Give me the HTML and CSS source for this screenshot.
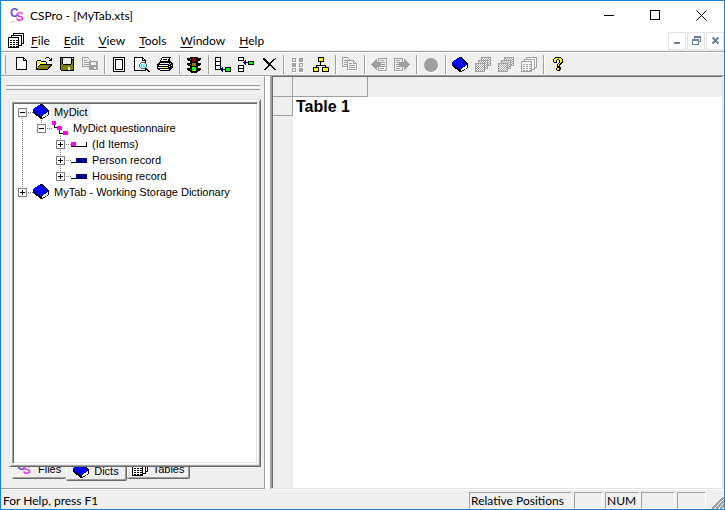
FILE: index.html
```html
<!DOCTYPE html>
<html lang="en">
<head>
<meta charset="utf-8">
<title>CSPro - [MyTab.xts]</title>
<link rel="stylesheet" href="styles.css">
</head>
<body>
<svg class="defs" aria-hidden="true">
  <symbol id="book" viewBox="0 0 16 16">
    <path d="M0 5l6-4 1-1h2l7 7v4l-7 4H8L0 9z" fill="#000"/>
    <path d="M9 12l6-4v3l-6 3z" fill="#fff"/>
    <path d="M0 5l6-4h2l7 7-7 4-7-5z" fill="#00f"/>
    <path d="M0 6h1v1h1v1h1v1h2v1h1v1h1v1h1v1H7v-1H6v-1H4v-1H3V9H1V8H0z" fill="#000080"/>
  </symbol>
  <symbol id="sheets" viewBox="0 0 16 16">
    <g fill="#fff" stroke="currentColor"><path d="M5.500.5h10v10h-10z"/><path d="M3.500 2.500h10v10h-10z"/><path d="M.5 4.500h10v10H.5z"/></g>
    <path d="M2 7h2v1H2zm3 0h2v1H5zm3 0h2v1H8zM2 9h2v1H2zm3 0h2v1H5zm3 0h2v1H8zM2 11h2v1H2zm3 0h2v1H5zm3 0h2v1H8zM2 13h2v1H2zm3 0h2v1H5zm3 0h2v1H8z" fill="currentColor"/>
  </symbol>
  <symbol id="stack" viewBox="0 0 16 16">
    <path d="M6 1h11v11h-3v3h-3v2H1v-1h9v-2h3v-3h3z" fill="#fff"/>
    <g fill="url(#dither)" stroke="#a0a0a0"><path d="M6.500.5h9v8h-9z"/><path d="M3.500 3.500h9v8h-9z"/><path d="M.5 6.500h9v8h-9z"/></g>
  </symbol>
  <pattern id="dither" width="2" height="2" patternUnits="userSpaceOnUse"><path d="M0 0h2v2H0z" fill="#fff"/><path d="M0 0h1v1H0zM1 1h1v1H1z" fill="#a0a0a0"/></pattern>
  <pattern id="straw" width="2" height="2" patternUnits="userSpaceOnUse"><path d="M0 0h2v2H0z" fill="#fff"/><path d="M0 0h1v1H0zM1 1h1v1H1z" fill="#ff0"/></pattern>
</svg>

<div class="window">
  <header class="titlebar">
    <svg class="icon" viewBox="0 0 16 16"><path d="M1 13h7v1H4v1H0v-1h1z" fill="#e0e0e0"/><text x="0" y="9" class="logo-mark"><tspan fill="#6a50d8">C</tspan><tspan dx="-3" dy="4" fill="#e43ce4">S</tspan></text></svg>
    <h1>CSPro - [MyTab.xts]</h1>
    <button class="caption" aria-label="Minimize"><svg viewBox="0 0 11 11"><path d="M0 5h10v1H0z"/></svg></button>
    <button class="caption" aria-label="Maximize"><svg viewBox="0 0 11 11"><path d="M.5.5h9v9h-9z" fill="none" stroke="#000"/></svg></button>
    <button class="caption" aria-label="Close"><svg viewBox="0 0 11 11" class="smooth"><path d="M.5.5l10 10M10.500.5l-10 10" stroke="#000" fill="none"/></svg></button>
  </header>

  <nav class="menubar">
    <svg class="icon"><use href="#sheets"/></svg>
    <button><u>F</u>ile</button><button><u>E</u>dit</button><button><u>V</u>iew</button><button><u>T</u>ools</button><button><u>W</u>indow</button><button><u>H</u>elp</button>
    <div class="mdi">
      <button aria-label="Minimize document"><svg viewBox="0 0 9 9"><path d="M1 6h6v2H1z"/></svg></button>
      <button aria-label="Restore document"><svg viewBox="0 0 9 9"><path d="M2 0h7v6H7V5h1V2H3v1H2zM0 3h7v6H0zm1 2v3h5V5z" fill-rule="evenodd"/></svg></button>
      <button aria-label="Close document"><svg viewBox="0 0 9 9" class="smooth"><path d="M1.500 1.500l6 6M7.500 1.500l-6 6" stroke="#6d7f93" stroke-width="2"/></svg></button>
    </div>
  </nav>

  <div class="toolbar" role="toolbar" aria-label="Standard">
    <i class="grip"></i>
    <button aria-label="New"><svg viewBox="0 0 16 16"><path d="M3.500.5h7l3 3v9h-10z" fill="#fff" stroke="#000"/><path d="M10 1h1v2h2v1h-3z"/></svg></button>
    <button aria-label="Open"><svg viewBox="0 0 16 16"><path d="M1 3h4v1h5v3H4v1H3v2H2v2H1z" fill="url(#straw)"/><path d="M1 3h4v1H1zM0 4h1v9H0zM5 4h5v1H5zM10 5h1v2h-1zM4 7h12v1H4zM3 8h1v1H3zM2 9h1v1H2zM1 11h1v1H1zM0 12h12v1H0zM15 8h-1v1h-1v1h-1v2h1v-1h1v-1h1V9h1V8zM9 1h1v1H9zM10 0h3v1h-3zM13 1h1v1h-1zM14 2h1v1h-1zM15 1h1v3h-3V3h2z"/><path d="M4 8h10v1h-1v1h-1v2H2v-2h1V9h1z" fill="#808000"/></svg></button>
    <button aria-label="Save"><svg viewBox="0 0 16 16"><path d="M1 0h14v14H2v-1H1z"/><path d="M2 1h1v6h1v1h8V7h1V3h1v10H2z" fill="#808000"/><path d="M4 1h8v6H4zM13 1h1v1h-1zM9 10h2v3H9z" fill="#efefef"/></svg></button>
    <button aria-label="Save all" disabled><svg viewBox="0 0 16 16"><path d="M1 1h6v2h2v3h8v8H8v-4H1z" fill="#fff"/><path d="M.5.5h5l3 3v6h-8z" fill="#efefef" stroke="#a0a0a0"/><path d="M2 3h3v1H2zM2 5h5v1H2zM2 7h5v1H2zM7 4h9v9H7z" fill="#a0a0a0"/><path d="M9 5h5v3H9zM12 10h2v2h-2z" fill="#efefef"/></svg></button>
    <i class="sep"></i>
    <button aria-label="Page setup"><svg viewBox="0 0 16 16"><path d="M2 0h12v15H2z"/><path d="M3 1h10v13H3z" fill="#fff"/><path d="M4 2h8v11H4z"/><path d="M5 3h6v9H5z" fill="#fff"/></svg></button>
    <button aria-label="Print preview"><svg viewBox="0 0 16 16"><path d="M.5.5h8l3 3v10H.5z" fill="#fff" stroke="#000"/><path d="M8 1h1v2h2v1H8zM12 11h1v1h1v1h1v1h1v1h-2v-1h-1v-1h-1v-1h-1v-1h1z"/><path d="M7 5h4v1h1v1h1v3h-1v1h-1v1H7v-1H6v-1H5V7h1V6h1z" fill="#606060"/><path d="M7 6h4v1h1v3h-1v1H7v-1H6V7h1z" fill="#bff"/><path d="M7 7h2v1H8v2H7zM9 9h2v1H9z" fill="#0ff"/></svg></button>
    <button aria-label="Print"><svg viewBox="0 0 16 16"><path d="M5 0h9v1h-1v3h1v1h1v1h1v5h-1v1h-1v1h-1v1H3v-1H1v-1H0V7h1V6h1V5h1V3h1V1h1z"/><path d="M6 1h6v1h-1v2H4V3h1V1zM3 6h9v1H2zM2 8h9v1H1zM1 10h10v1H1zM3 12h9v1H3z" fill="#fff"/><path d="M6 2h4v1H6zM5 4h5v1H5z"/><path d="M12 7h1v1h-1zM13 6h1v1h-1zM12 9h1v1h-1zM14 8h1v1h-1z" fill="#c0c0c0"/><path d="M7 10h3v1H7z" fill="#ff0"/></svg></button>
    <i class="sep"></i>
    <button aria-label="Run"><svg viewBox="0 0 16 16"><path d="M4 0h8v1h3v2h-1v1h-2v2h3v2h-1v1h-2v2h3v2h-1v1h-2v1h-1v1H5v-1H4v-1H2v-1H1v-2h3V9H2V8H1V6h3V4H2V3H1V1h3z"/><path d="M6 1h4v4H6z" fill="#800000"/><path d="M6 6h4v3H6z" fill="#808000"/><path d="M6 10h4v4H6z" fill="#0f0"/><path d="M7 10h1v1H7zM9 11h1v1H9zM7 13h2v1H7z" fill="#ff0"/><path d="M4 2h1v1H4zM4 7h1v1H4zM4 12h1v1H4z" fill="#808080"/></svg></button>
    <i class="sep"></i>
    <button aria-label="Add"><svg viewBox="0 0 16 16"><path d="M0 0h6v13H0z"/><path d="M1 1h4v3H1zM1 5h4v3H1zM1 9h4v3H1z" fill="#fff"/><path d="M10 10h6v5h-6z"/><path d="M11 11h4v3h-4z" fill="#0f0"/><path d="M5 12h1v-1h1v-1h1v2h2v1H8v2H7v-1H6v-1H5z" fill="#000080"/></svg></button>
    <button aria-label="Insert"><svg viewBox="0 0 16 16"><path d="M0 0h6v4H0zM0 8h6v7H0zM10 4h6v4h-6z"/><path d="M1 1h4v2H1zM1 9h4v2H1zM1 12h4v2H1z" fill="#fff"/><path d="M11 5h4v2h-4z" fill="#0f0"/><path d="M5 5h1V4h1V3h1v2h2v1H8v2H7V7H6V6H5z" fill="#000080"/></svg></button>
    <button aria-label="Delete"><svg viewBox="0 0 16 16"><path d="M2 1h2v1h1v1h1v1h1v1h1v1h1V5h1V4h1V3h1V2h2V1h1v1h-1v1h-1v1h-1v1h-1v1h-1v2h1v1h1v1h1v1h1v1h1v1h-2v-1h-1v-1h-1v-1h-1V9H8v1H7v1H6v1H5v1H3v-1h1v-1h1v-1h1V9h1V7H6V6H5V5H4V4H3V3H2z"/></svg></button>
    <i class="sep"></i>
    <button aria-label="Levels" disabled><svg viewBox="0 0 16 16"><path d="M3 2h4v4H3zM10 2h4v4h-4zM3 7h4v4H3zM10 7h4v4h-4zM3 12h4v4H3zM10 12h4v4h-4z" fill="#fff"/><path d="M2 1h4v4H2zM9 1h4v4H9zM2 6h4v4H2zM9 6h4v4H9zM2 11h4v4H2zM9 11h4v4H9z" fill="#a0a0a0"/><path d="M3 2h2v2H3zM3 12h2v2H3zM10 7h2v2h-2z" fill="#efefef"/></svg></button>
    <button aria-label="Tree"><svg viewBox="0 0 16 16"><path d="M5 0h6v5H5zM7 5h1v3h5v3h-1V9H4v2H3V8h4zM0 10h6v5H0zM9 10h7v5H9z"/><path d="M6 1h4v3H6zM1 11h4v3H1zM10 11h5v3h-5z" fill="#ff0"/></svg></button>
    <i class="sep"></i>
    <button aria-label="Copy" disabled><svg viewBox="0 0 16 16"><path d="M1 1h6v2h6v1h3v10H6v-3H1z" fill="#fff"/><g fill="#efefef" stroke="#a0a0a0"><path d="M.5.5h5l2 2v7h-7z"/><path d="M5.500 3.500h6l3 3v6h-9z"/></g><path d="M2 3h3v1H2zM2 5h3v1H2zM2 7h3v1H2zM7 6h3v1H7zM7 8h6v1H7zM7 10h6v1H7zM11 4h1v2h2v1h-3z" fill="#a0a0a0"/></svg></button>
    <i class="sep"></i>
    <button aria-label="Previous" disabled><svg viewBox="0 0 16 16"><path d="M8 2h9v13H8z" fill="#fff"/><path d="M7 1h9v13H7z" fill="#a0a0a0"/><path d="M8 2h7v11H8z" fill="#efefef"/><path d="M9 3h4v1H9zM9 5h5v1H9zM9 7h5v1H9zM9 9h5v1H9zM9 11h4v1H9zM0 7h1V6h1V5h1V4h1V3h1V2h1v3h4v5H6v3H5v-1H4v-1H3v-1H2V9H1V8H0z" fill="#a0a0a0"/></svg></button>
    <button aria-label="Next" disabled><svg viewBox="0 0 16 16"><path d="M1 2h9v13H1z" fill="#fff"/><path d="M0 1h9v13H0z" fill="#a0a0a0"/><path d="M1 2h7v11H1z" fill="#efefef"/><path d="M2 3h4v1H2zM2 5h5v1H2zM2 7h5v1H2zM2 9h5v1H2zM2 11h4v1H2z" fill="#a0a0a0"/><path d="M16 7h-1V6h-1V5h-1V4h-1V3h-1V2h-1v3H5v5h5v3h1v-1h1v-1h1v-1h1V9h1V8h1z" fill="#a0a0a0"/></svg></button>
    <i class="sep"></i>
    <button aria-label="Stop" disabled><svg viewBox="0 0 16 16" class="smooth"><circle cx="9" cy="9" r="7" fill="#fff"/><circle cx="8" cy="8" r="7" fill="#a0a0a0"/></svg></button>
    <i class="sep"></i>
    <button aria-label="Dictionaries"><svg viewBox="0 0 16 16"><use href="#book"/></svg></button>
    <button aria-label="Forms" disabled><svg viewBox="0 0 16 16"><use href="#stack"/></svg></button>
    <button aria-label="Order" disabled><svg viewBox="0 0 16 16"><use href="#stack"/></svg></button>
    <button aria-label="Tables" disabled><svg viewBox="0 0 16 16" class="gray"><use href="#sheets"/></svg></button>
    <i class="sep"></i>
    <button aria-label="Help"><svg viewBox="0 0 16 16"><path d="M5 0h6v1h1v1h1v4h-1v1h-1v1h-1v2h1v3h-1v1H7v-1H6v-2h1V7h1V6h1V3H7v3H4V5H3V2h1V1h1z"/><path d="M5 1h6v1h1v3h-1v1h-1v1H9v2H8V7h1V6h1V3H9V2H7v1H6v2H4V2h1zM7 11h2v2H7z" fill="#ff0"/></svg></button>
  </div>

  <main>
    <aside class="dock">
      <div class="dockgrip"></div>
      <div class="frame">
        <ul class="tree">
          <li>
            <div class="row"><button class="box" aria-label="Collapse"></button><i class="link"></i><svg class="icon"><use href="#book"/></svg><span class="label picked">MyDict</span></div>
            <ul>
              <li>
                <div class="row"><button class="box" aria-label="Collapse"></button><i class="link"></i><svg class="icon" viewBox="0 0 16 16"><path d="M2 4h1v3h4v1H2zM7 8h1v5h4v1H7z"/><path d="M0 1h4v4H0zM5 6h5v4H5zM11 11h5v4h-5z" fill="#f0f"/></svg><span class="label">MyDict questionnaire</span></div>
                <ul>
                  <li><div class="row"><button class="box plus" aria-label="Expand"></button><i class="link"></i><svg class="icon" viewBox="0 0 16 16"><path d="M0 10h16v1H0zM15 6h1v5h-1z"/><path d="M0 6h5v4H0z" fill="#f0f"/></svg><span class="label">(Id Items)</span></div></li>
                  <li><div class="row"><button class="box plus" aria-label="Expand"></button><i class="link"></i><svg class="icon" viewBox="0 0 16 16"><path d="M0 10h6v1H0z"/><path d="M5 6h11v5H5z" fill="#000080"/></svg><span class="label">Person record</span></div></li>
                  <li><div class="row"><button class="box plus" aria-label="Expand"></button><i class="link"></i><svg class="icon" viewBox="0 0 16 16"><path d="M0 10h6v1H0z"/><path d="M5 6h11v5H5z" fill="#000080"/></svg><span class="label">Housing record</span></div></li>
                </ul>
              </li>
            </ul>
          </li>
          <li><div class="row"><button class="box plus" aria-label="Expand"></button><i class="link"></i><svg class="icon"><use href="#book"/></svg><span class="label">MyTab - Working Storage Dictionary</span></div></li>
        </ul>
      </div>
      <div class="tabs" role="tablist">
        <button role="tab"><svg class="icon" viewBox="0 0 16 16"><path d="M1 13h7v1H4v1H0v-1h1z" fill="#fff"/><text x="0" y="9" class="logo-mark"><tspan fill="#6a50d8">C</tspan><tspan dx="-3" dy="4" fill="#e43ce4">S</tspan></text></svg>Files</button>
        <button role="tab" aria-selected="true" class="active"><svg class="icon"><use href="#book"/></svg>Dicts</button>
        <button role="tab"><svg class="icon"><use href="#sheets"/></svg>Tables</button>
      </div>
    </aside>
    <div class="splitter"></div>
    <section class="view">
      <div class="corner"></div>
      <div class="colhead"><div class="cell"></div></div>
      <div class="rowhead"><div class="cell"></div></div>
      <h2>Table 1</h2>
    </section>
  </main>

  <footer class="status">
    <span class="message">For Help, press F1</span>
    <span class="pane positions">Relative Positions</span>
    <span class="pane small"></span>
    <span class="pane num">NUM</span>
    <span class="pane num"></span>
    <span class="pane small"></span>
    <svg class="sizer" viewBox="0 0 12 12"><path d="M0 12L12 0M4 12l8-8M8 12l4-4" stroke="#a0a0a0" stroke-width="1.500"/></svg>
  </footer>
</div>
</body>
</html>
```
FILE: styles.css
```css
* { box-sizing: border-box; }
body { margin: 0; font: 12px/16px Lato, "Open Sans", sans-serif; color: #000; }
button { margin: 0; padding: 0; border: 0; background: none; font: inherit; color: inherit; }
svg { display: block; shape-rendering: crispEdges; overflow: visible; }
.smooth { shape-rendering: auto; }
.defs { position: absolute; width: 0; height: 0; }
.icon { width: 16px; height: 16px; flex: none; }
.gray { color: #a0a0a0; }
.logo-mark { font: bold 12px "Liberation Sans", sans-serif; }

.window { display: flex; flex-direction: column; height: 100vh; border: 1px solid #1883d7; background: #efefef; }

.titlebar { display: flex; align-items: center; height: 29px; padding-left: 9px; background: #fff; }
.titlebar h1 { flex: 1; margin: 0 0 0 4px; font-size: 12px; font-weight: 400; }
.caption { width: 46px; height: 29px; display: flex; align-items: center; justify-content: center; }
.caption svg { width: 11px; height: 11px; }

.menubar { display: flex; align-items: center; height: 20px; padding-left: 7px; background: #fff; }
.menubar > .icon { margin-top: 2px; }
.menubar > button { padding: 2px 7px 0; }
.menubar u { text-decoration-thickness: 1px; text-underline-offset: 2px; }
.mdi { display: flex; gap: 1px; margin-left: auto; padding-top: 1px; }
.mdi button { width: 18px; height: 18px; border: 1px solid #e3e3e3; display: flex; align-items: center; justify-content: center; }
.mdi svg { width: 9px; height: 9px; fill: #6d7f93; }

.toolbar { display: flex; height: 25px; padding: 3px 0 0 2px; margin-top: 1px; border-top: 1px solid #a0a0a0; border-bottom: 1px solid #a0a0a0; box-shadow: inset 0 1px #fff; }
.grip { width: 3px; height: 19px; margin-right: 4px; border-left: 1px solid #fff; border-right: 1px solid #a0a0a0; }
.toolbar button { width: 23px; height: 19px; padding: 1px 3px; }
.toolbar svg { width: 16px; height: 16px; }
.sep { width: 2px; height: 19px; margin: 0 2px; border-left: 1px solid #a0a0a0; border-right: 1px solid #fff; }

main { flex: 1; display: flex; min-height: 0; }
.dock { width: 264px; display: flex; flex-direction: column; padding: 6px 3px 0 8px; border-right: 1px solid #a0a0a0; border-top: 1px solid #fff; border-bottom: 1px solid #a0a0a0; }
.dockgrip { flex: none; height: 7px; margin: 0 1px 9px -3px; border: solid; border-width: 1px 0; border-color: #fff #a0a0a0 #a0a0a0; background: linear-gradient(#efefef 1px, #a0a0a0 1px 2px, #efefef 2px 3px, #fff 3px 4px, #efefef 4px); }
.frame { position: relative; z-index: 1; flex: 1; min-height: 0; padding: 2px; border: 1px solid; border-color: #e3e3e3 #696969 #696969 #e3e3e3; box-shadow: inset 1px 1px #fff, inset -1px -1px #a0a0a0; display: flex; background: #efefef; }
.tree { flex: 1; background: #fff; border: 1px solid; border-color: #a0a0a0 #fff #fff #a0a0a0; box-shadow: inset 1px 1px #696969, inset -1px -1px #e3e3e3; padding: 1px 5px; font: 11px/16px "Liberation Sans", sans-serif; }
.tree, .tree ul { margin: 0; list-style: none; }
.tree ul { padding: 0 0 0 19px; }
.tree li { background: repeating-linear-gradient(#808080 0 1px, transparent 1px 2px) 4px 0 / 1px 100% no-repeat; }
.tree li:last-child { background-size: 1px 8px; }
.tree > li:first-child { background-position: 4px 8px; }
.row { display: flex; align-items: center; height: 16px; white-space: nowrap; }
.box { width: 9px; height: 9px; border: 1px solid #808080; background: linear-gradient(#000, #000) center / 5px 1px no-repeat #fff; }
.plus { background: linear-gradient(#000, #000) center / 5px 1px no-repeat, linear-gradient(#000, #000) center / 1px 5px no-repeat #fff; }
.link { width: 6px; height: 1px; background: repeating-linear-gradient(90deg, transparent 0 1px, #808080 1px 2px); }
.label { margin-left: 2px; padding: 0 3px; }
.picked { background: #efefef; }

.tabs { display: flex; align-items: flex-start; height: 21px; padding-left: 3px; font: 11px/16px "Liberation Sans", sans-serif; }
.tabs button { display: flex; gap: 5px; height: 19px; margin-top: -7px; padding: 1px 5px 0; border: solid #696969; border-width: 0 1px 1px 0; border-radius: 0 0 2px 2px; box-shadow: inset 1px 0 #fff, inset -1px -1px #a0a0a0; }
.tabs button:first-child { border-right: 0; box-shadow: inset 1px 0 #fff, inset 0 -1px #a0a0a0; }
.tabs .active { height: 21px; padding: 3px 7px 0; }

.splitter { width: 5px; background: #fff; }
.view { flex: 1; display: grid; grid-template: 20px 1fr / 20px 1fr; margin-right: 1px; border-left: 2px solid #a0a0a0; border-right: 1px solid #e3e3e3; border-bottom: 1px solid #e3e3e3; box-shadow: inset 1px 1px #696969; padding: 1px 0 0 1px; background: #fff; }
.corner, .cell { border: solid #a0a0a0; border-width: 0 1px 1px 0; }
.corner, .colhead, .rowhead { background: #efefef; }
.colhead .cell { width: 75px; height: 20px; }
.rowhead .cell { height: 19px; }
.view h2 { margin: 0 3px; font: bold 16px/20px "Liberation Sans", sans-serif; }

.status { display: flex; align-items: center; gap: 2px; height: 20px; padding: 2px 0 0 2px; border-top: 1px solid #fff; }
.message { flex: 1; }
.pane { height: 17px; padding-left: 1px; border: 1px solid; border-color: #a0a0a0 #fff #fff #a0a0a0; white-space: nowrap; }
.positions { width: 103px; }
.small { width: 29px; }
.num { width: 34px; }
.sizer { width: 12px; height: 12px; margin: 5px 0 0 4px; overflow: hidden; }
```
